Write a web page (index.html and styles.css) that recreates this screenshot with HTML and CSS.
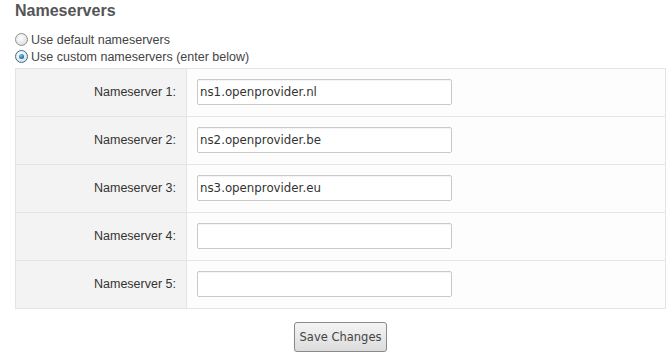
FILE: index.html
```html
<!DOCTYPE html>
<html>
<head>
<meta charset="utf-8">
<link rel="stylesheet" href="styles.css">
</head>
<body>
<div class="page">
  <h2 class="title">Nameservers</h2>
  <label class="opt"><span class="radio"></span>Use default nameservers</label>
  <label class="opt"><span class="radio on"></span>Use custom nameservers (enter below)</label>
  <table class="ns">
    <tr><td class="lbl">Nameserver 1:</td><td class="val"><div class="field">ns1.openprovider.nl</div></td></tr>
    <tr><td class="lbl">Nameserver 2:</td><td class="val"><div class="field">ns2.openprovider.be</div></td></tr>
    <tr><td class="lbl">Nameserver 3:</td><td class="val"><div class="field">ns3.openprovider.eu</div></td></tr>
    <tr><td class="lbl">Nameserver 4:</td><td class="val"><div class="field"></div></td></tr>
    <tr><td class="lbl">Nameserver 5:</td><td class="val"><div class="field"></div></td></tr>
  </table>
  <div class="actions"><button class="btn">Save Changes</button></div>
</div>
</body>
</html>
```
FILE: styles.css
```css
html, body { margin: 0; padding: 0; background: #fff; }
.page { width: 651px; padding: 0 0 0 15px; font-family: "Liberation Sans", Arial, sans-serif; }
.title { margin: 2px 0 11px; font-size: 16px; line-height: 18px; font-weight: bold; color: #555; }
.opt { display: flex; align-items: center; height: 17px; font-size: 12.5px; color: #444; }
.radio { width: 11px; height: 11px; border-radius: 50%; border: 1px solid #8f8f8f; background: radial-gradient(circle at 40% 35%, #fff 0%, #e6e6e6 60%, #cfcfcf 100%); margin: 0 3px 0 0; box-sizing: content-box; position: relative; }
.radio.on { border-color: #3c6f8c; }
.radio.on::after { content: ""; position: absolute; left: 3px; top: 3px; width: 5px; height: 5px; border-radius: 50%; background: radial-gradient(circle at 40% 35%, #6ad0ff 0%, #1679b9 60%, #0b3f67 100%); }
.ns { margin-top: 3px; width: 651px; border-collapse: collapse; border: 1px solid #e4e4e4; }
.ns td { border-top: 1px solid #e4e4e4; padding: 0; vertical-align: top; }
.lbl { width: 160px; height: 47px; background: #f3f3f3; text-align: right; padding-right: 10px !important; font-size: 12.5px; color: #333; line-height: 47px; border-right: 1px solid #e4e4e4; }
.val { height: 37px; background: #fdfdfd; padding: 10px 0 0 10px !important; }
.field { width: 251px; height: 24px; border: 1px solid #c9c9c9; border-radius: 2px; background: #fff; font-family: "DejaVu Sans", Verdana, sans-serif; font-size: 11.8px; color: #333; line-height: 24px; padding-left: 2px; box-sizing: content-box; box-shadow: inset 0 1px 1px rgba(0,0,0,0.05); }
.actions { display: flex; justify-content: center; width: 651px; padding-top: 13px; }
.btn { width: 93px; height: 30px; border: 1px solid #8a8a8a; border-radius: 3px; background: linear-gradient(#f4f4f4, #dcdcdc); font-family: "DejaVu Sans", Tahoma, sans-serif; font-size: 11.5px; color: #444; padding: 0; box-shadow: 0 1px 1px rgba(0,0,0,0.1); }
```
